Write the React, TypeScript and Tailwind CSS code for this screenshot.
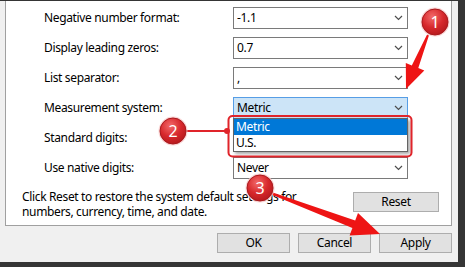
import React from 'react';

type Pt = [number, number];

function arrowPoints(from: Pt, tip: Pt, w0: number, w1: number, headLen: number, headW: number) {
  const [x1, y1] = from;
  const [x2, y2] = tip;
  const len = Math.hypot(x2 - x1, y2 - y1);
  const ux = (x2 - x1) / len;
  const uy = (y2 - y1) / len;
  const px = -uy;
  const py = ux;
  const bx = x2 - ux * headLen;
  const by = y2 - uy * headLen;
  const pts: Pt[] = [
    [x1 + px * w0, y1 + py * w0],
    [bx + px * w1, by + py * w1],
    [bx + px * headW, by + py * headW],
    [x2, y2],
    [bx - px * headW, by - py * headW],
    [bx - px * w1, by - py * w1],
    [x1 - px * w0, y1 - py * w0],
  ];
  return pts.map(p => p.map(n => n.toFixed(1)).join(',')).join(' ');
}

function Chevron() {
  return (
    <svg width="9" height="6" viewBox="0 0 9 6" className="shrink-0">
      <path d="M1 1l3.5 3.5L8 1" fill="none" stroke="#4d4d4d" strokeWidth="1.2" />
    </svg>
  );
}

function Combo({ value, active }: { value: string; active?: boolean }) {
  return (
    <div
      className={`w-[175px] h-[22px] flex items-center justify-between pl-[3px] pr-[4px] border ${
        active ? 'bg-[#cce4f7] border-[#569de5]' : 'bg-white border-[#7a7a7a]'
      }`}
    >
      <span>{value}</span>
      <Chevron />
    </div>
  );
}

function Badge({ x, y, n }: { x: number; y: number; n: string }) {
  return (
    <g>
      <circle cx={x} cy={y} r={14.5} fill="#f7c9c9" opacity={0.8} />
      <circle cx={x} cy={y} r={13} fill="url(#badgeFill)" stroke="#a9181c" strokeWidth={1} />
      <text
        x={x}
        y={y + 5.5}
        textAnchor="middle"
        fill="#fff"
        fontSize={16}
        fontFamily="'Noto Sans', sans-serif"
      >
        {n}
      </text>
    </g>
  );
}

// the "Standard digits" box sits under the open list, so its value is not drawn
const rows: { label: string; value: string; active?: boolean; open?: boolean }[] = [
  { label: 'Negative number format:', value: '-1.1' },
  { label: 'Display leading zeros:', value: '0.7' },
  { label: 'List separator:', value: ',' },
  { label: 'Measurement system:', value: 'Metric', active: true, open: true },
  { label: 'Standard digits:', value: '' },
  { label: 'Use native digits:', value: 'Never' },
];

export default function App() {
  return (
    <div className="relative w-[465px] h-[267px] overflow-hidden bg-[#353535] pt-px pr-[7px] pb-[5px] font-['Noto_Sans',sans-serif] text-[12px] tracking-[-0.35px] text-black">
      <div className="h-full bg-[#f0f0f0] pl-[5px] pr-[6px] flex flex-col">
        <div className="h-[225px] bg-white border-x border-b border-[#a0a0a0] pt-[6px] flex flex-col">
          <div className="flex flex-col gap-[8px]">
            {rows.map(r => (
              <div key={r.label} className="flex items-center h-[22px] pl-[38px]">
                <span className="w-[189px]">{r.label}</span>
                <div className="relative">
                  <Combo value={r.value} active={r.active} />
                  {r.open && (
                    <div className="absolute z-10 top-[21px] left-0 w-[175px] bg-white border border-[#646464] shadow-[2px_2px_3px_rgba(0,0,0,0.35)]">
                      <div className="h-[16px] flex items-center pl-[2px] bg-[#0078d7] text-white">Metric</div>
                      <div className="h-[16px] flex items-center pl-[2px]">U.S.</div>
                    </div>
                  )}
                </div>
              </div>
            ))}
          </div>
          <div className="flex items-start justify-between mt-[10px] pl-[16px] pr-[12px]">
            <p className="leading-[15px]">
              Click Reset to restore the system default settings for
              <br />
              numbers, currency, time, and date.
            </p>
            <button className="mt-[3px] w-[86px] h-[20px] bg-[#e1e1e1] border border-[#adadad] tracking-[-0.35px]">
              Reset
            </button>
          </div>
        </div>
        <div className="flex justify-end gap-[8px] mt-[7px]">
          {['OK', 'Cancel', 'Apply'].map(b => (
            <button key={b} className="w-[73px] h-[20px] bg-[#e1e1e1] border border-[#adadad] tracking-[-0.35px]">
              {b}
            </button>
          ))}
        </div>
      </div>

      <svg className="absolute inset-0 z-20 pointer-events-none" width="465" height="267" viewBox="0 0 465 267">
        <defs>
          <radialGradient id="badgeFill" cx="40%" cy="30%" r="75%">
            <stop offset="0%" stopColor="#f26a6a" />
            <stop offset="55%" stopColor="#d7282c" />
            <stop offset="100%" stopColor="#b3181c" />
          </radialGradient>
        </defs>
        <rect x="228.5" y="116" width="183" height="40.5" rx="4" fill="none" stroke="#e0242a" strokeWidth="2" />
        <line x1="184" y1="131" x2="226" y2="131" stroke="#e0242a" strokeWidth="2" />
        <circle cx="227" cy="131" r="3" fill="#e0242a" />
        <polygon points={arrowPoints([428, 35], [406, 89], 1, 3.5, 24, 10)} fill="#ee1414" />
        <polygon points={arrowPoints([268, 192], [380, 234], 1.2, 4, 28, 12)} fill="#ee1414" />
        <Badge x={435} y={22} n="1" />
        <Badge x={173} y={131} n="2" />
        <Badge x={260} y={188} n="3" />
      </svg>
    </div>
  );
}
